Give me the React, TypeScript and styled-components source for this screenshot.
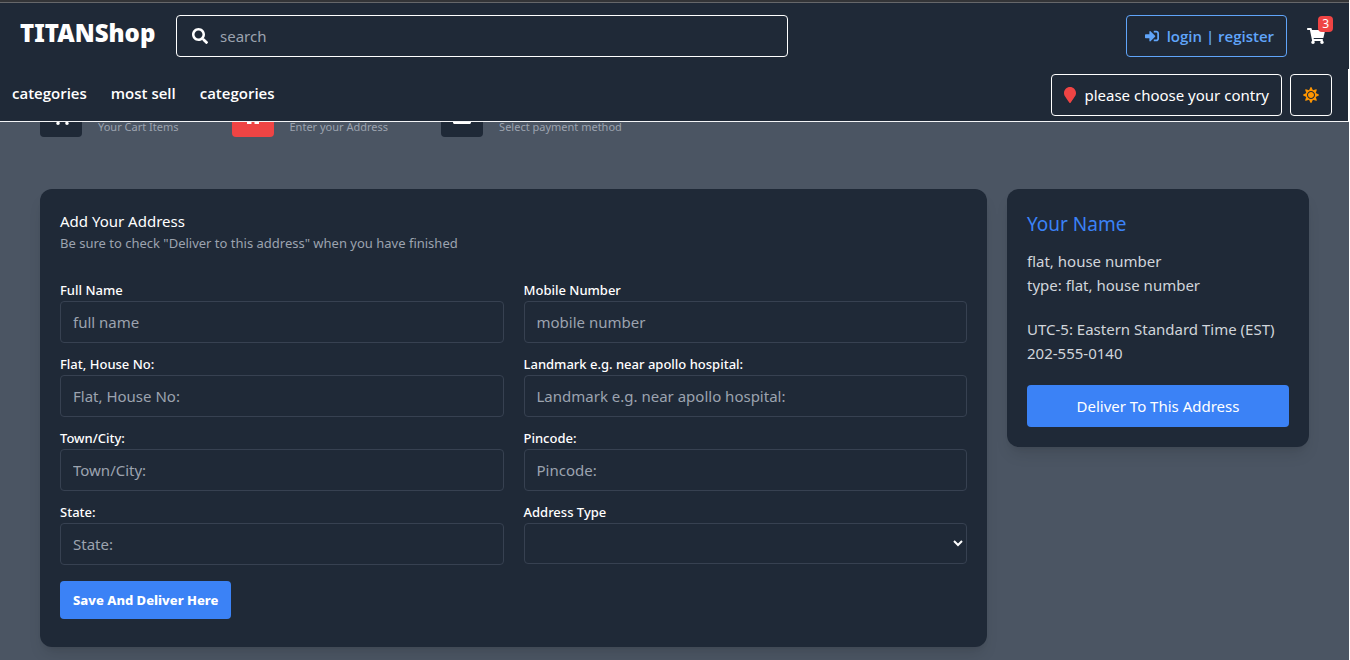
import React from "react";
import styled, { createGlobalStyle } from "styled-components";
import {
  FaSearch,
  FaSignInAlt,
  FaShoppingCart,
  FaMapMarker,
  FaSun,
  FaHome,
  FaCreditCard,
} from "react-icons/fa";

const GlobalStyle = createGlobalStyle`
  *, *::before, *::after { box-sizing: border-box; }
  html { background: #ffffff; }
  body {
    margin: 0;
    overflow-x: hidden;
    font-family: "Noto Sans", "Open Sans", sans-serif;
    font-size: 15px;
    line-height: 24px;
    color: #ffffff;
  }
  h1, h2, p { margin: 0; font-weight: 400; }
  button, input, select { font: inherit; color: inherit; margin: 0; }
  button { cursor: pointer; }
  a { color: inherit; text-decoration: none; }
`;

const Page = styled.div`
  min-height: 100vh;
  margin-right: 1px;
  background: #4b5563;
`;

const Header = styled.header`
  position: fixed;
  top: 0;
  left: 0;
  right: 1px;
  z-index: 10;
  background: #1f2937;
  border-bottom: 1px solid #f3f4f6;
`;

const Strip = styled.div`
  height: 3px;
  background: #333437;
  border-bottom: 1px solid #66676a;
`;

const TopBar = styled.div`
  display: flex;
  align-items: center;
  justify-content: space-between;
  padding: 12px 16px 12px 20px;
`;

const Brand = styled.div`
  display: flex;
  align-items: center;
  gap: 20px;
  flex: 1;
`;

const Logo = styled.a`
  width: 136px;
  padding-bottom: 6px;
  font-size: 24px;
  font-weight: 900;
  white-space: nowrap;
`;

const SearchBox = styled.label`
  display: flex;
  align-items: center;
  gap: 12px;
  flex: 0 1 612px;
  height: 42px;
  padding: 0 15px;
  border: 1px solid #ffffff;
  border-radius: 4px;

  input {
    flex: 1;
    min-width: 0;
    padding: 0;
    border: 0;
    outline: 0;
    background: transparent;
  }
  input::placeholder { color: #9ca3af; opacity: 1; }
`;

const Actions = styled.div`
  display: flex;
  align-items: center;
  gap: 20px;
`;

const OutlineButton = styled.button`
  display: flex;
  align-items: center;
  gap: 8px;
  height: 42px;
  padding: 0 12px;
  border: 1px solid #ffffff;
  border-radius: 4px;
  background: transparent;
  white-space: nowrap;
`;

const LoginButton = styled(OutlineButton)`
  padding-left: 18px;
  border-color: #60a5fa;
  color: #60a5fa;
  font-family: "Open Sans", "Noto Sans", sans-serif;
  font-weight: 600;
`;

const Pin = styled(FaMapMarker)`
  width: 12px;
  height: 16px;
  color: #ef4444;
`;

const Cart = styled.a`
  position: relative;
  display: flex;
  padding-right: 8px;

  svg { width: 18px; height: 16px; }
`;

const Badge = styled.span`
  position: absolute;
  right: 0;
  bottom: 12px;
  padding: 0 4px;
  border-radius: 4px;
  background: #ef4444;
  font-size: 12px;
  line-height: 16px;
`;

const NavBar = styled.div`
  display: flex;
  align-items: center;
  justify-content: space-between;
  padding: 5px 16px 5px 12px;
  border-right: 1px solid #ffffff;
`;

const Nav = styled.nav`
  display: flex;
  gap: 24px;
  padding-bottom: 4px;
  font-family: "Open Sans", "Noto Sans", sans-serif;
  font-weight: 600;
`;

const Tools = styled.div`
  display: flex;
  gap: 8px;
`;

const Main = styled.main`
  padding: 95px 40px 13px;
`;

const Steps = styled.ol`
  display: flex;
  gap: 53px;
  margin: 0 0 52px;
  padding: 0;
  list-style: none;
`;

const Step = styled.li`
  display: flex;
  align-items: flex-end;
  gap: 16px;
  color: #9ca3af;
  font-size: 11px;
  line-height: 20px;
`;

const StepIcon = styled.span<{ $active?: boolean }>`
  display: grid;
  place-items: center;
  width: 42px;
  height: 42px;
  padding-top: 2px;
  border-radius: 4px;
  background: ${(p) => (p.$active ? "#ef4444" : "#1f2937")};
  color: #ffffff;

  svg { width: 18px; height: 16px; }
`;

const Columns = styled.div`
  display: grid;
  grid-template-columns: minmax(0, 1fr) 302px;
  align-items: start;
  gap: 20px;
`;

const Card = styled.section`
  padding: 20px;
  border-radius: 12px;
  background: #1f2937;
  box-shadow: 0 10px 15px -3px rgba(0, 0, 0, 0.1), 0 4px 6px -4px rgba(0, 0, 0, 0.1);
`;

const FormCard = styled(Card)`
  padding-bottom: 28px;
`;

const Title = styled.h1`
  font-size: 15px;
  line-height: 24px;
`;

const Hint = styled.p`
  margin-bottom: 28px;
  color: #9ca3af;
  font-size: 13px;
  line-height: 20px;
`;

const Fields = styled.div`
  display: grid;
  grid-template-columns: repeat(2, minmax(0, 1fr));
  gap: 12px 20px;
  margin-bottom: 16px;
`;

const Field = styled.div`
  display: flex;
  flex-direction: column;
  gap: 2px;

  label {
    font-size: 13px;
    font-weight: 500;
    line-height: 18px;
  }
  input, select {
    width: 100%;
    border: 1px solid #374151;
    border-radius: 4px;
    outline: 0;
    background: #1f2937;
  }
  input { height: 42px; padding: 0 12px; }
  input::placeholder { color: #9ca3af; opacity: 1; }
  select { height: 41px; padding: 0 4px; }
`;

const PrimaryButton = styled.button<{ $wide?: boolean }>`
  width: ${(p) => (p.$wide ? "100%" : "auto")};
  height: ${(p) => (p.$wide ? 42 : 38)}px;
  padding: 0 13px;
  border: 0;
  border-radius: 4px;
  background: #3b82f6;
  color: #ffffff;
  font-size: ${(p) => (p.$wide ? 15 : 13)}px;
  font-weight: ${(p) => (p.$wide ? 400 : 800)};
`;

const Name = styled.h2`
  margin-bottom: 10px;
  color: #3b82f6;
  font-size: 19px;
  line-height: 30px;
`;

const Lines = styled.p`
  margin-bottom: 20px;
  color: #d1d5db;
`;

const fields = [
  { id: "full-name", label: "Full Name", hint: "full name" },
  { id: "mobile", label: "Mobile Number", hint: "mobile number" },
  { id: "flat", label: "Flat, House No:", hint: "Flat, House No:" },
  { id: "landmark", label: "Landmark e.g. near apollo hospital:", hint: "Landmark e.g. near apollo hospital:" },
  { id: "town", label: "Town/City:", hint: "Town/City:" },
  { id: "pincode", label: "Pincode:", hint: "Pincode:" },
  { id: "state", label: "State:", hint: "State:" },
];

export default function App() {
  return (
    <Page>
      <GlobalStyle />
      <Header>
        <Strip />
        <TopBar>
          <Brand>
            <Logo href="#">TITANShop</Logo>
            <SearchBox>
              <FaSearch size={16} />
              <input type="search" placeholder="search" aria-label="search" />
            </SearchBox>
          </Brand>
          <Actions>
            <LoginButton>
              <FaSignInAlt size={14} />
              login | register
            </LoginButton>
            <Cart href="#">
              <FaShoppingCart />
              <Badge>3</Badge>
            </Cart>
          </Actions>
        </TopBar>
        <NavBar>
          <Nav>
            <a href="#">categories</a>
            <a href="#">most sell</a>
            <a href="#">categories</a>
          </Nav>
          <Tools>
            <OutlineButton>
              <Pin />
              please choose your contry
            </OutlineButton>
            <OutlineButton>
              <FaSun size={16} color="#ff9500" />
            </OutlineButton>
          </Tools>
        </NavBar>
      </Header>
      <Main>
        <Steps>
          <Step>
            <StepIcon><FaShoppingCart /></StepIcon>
            Your Cart Items
          </Step>
          <Step>
            <StepIcon $active><FaHome /></StepIcon>
            Enter your Address
          </Step>
          <Step>
            <StepIcon><FaCreditCard /></StepIcon>
            Select payment method
          </Step>
        </Steps>
        <Columns>
          <FormCard as="form">
            <Title>Add Your Address</Title>
            <Hint>Be sure to check "Deliver to this address" when you have finished</Hint>
            <Fields>
              {fields.map((f) => (
                <Field key={f.id}>
                  <label htmlFor={f.id}>{f.label}</label>
                  <input id={f.id} type="text" placeholder={f.hint} />
                </Field>
              ))}
              <Field>
                <label htmlFor="type">Address Type</label>
                <select id="type" />
              </Field>
            </Fields>
            <PrimaryButton type="button">Save And Deliver Here</PrimaryButton>
          </FormCard>
          <Card>
            <Name>Your Name</Name>
            <Lines>
              flat, house number
              <br />
              type: flat, house number
            </Lines>
            <Lines>
              UTC-5: Eastern Standard Time (EST)
              <br />
              202-555-0140
            </Lines>
            <PrimaryButton type="button" $wide>Deliver To This Address</PrimaryButton>
          </Card>
        </Columns>
      </Main>
    </Page>
  );
}
